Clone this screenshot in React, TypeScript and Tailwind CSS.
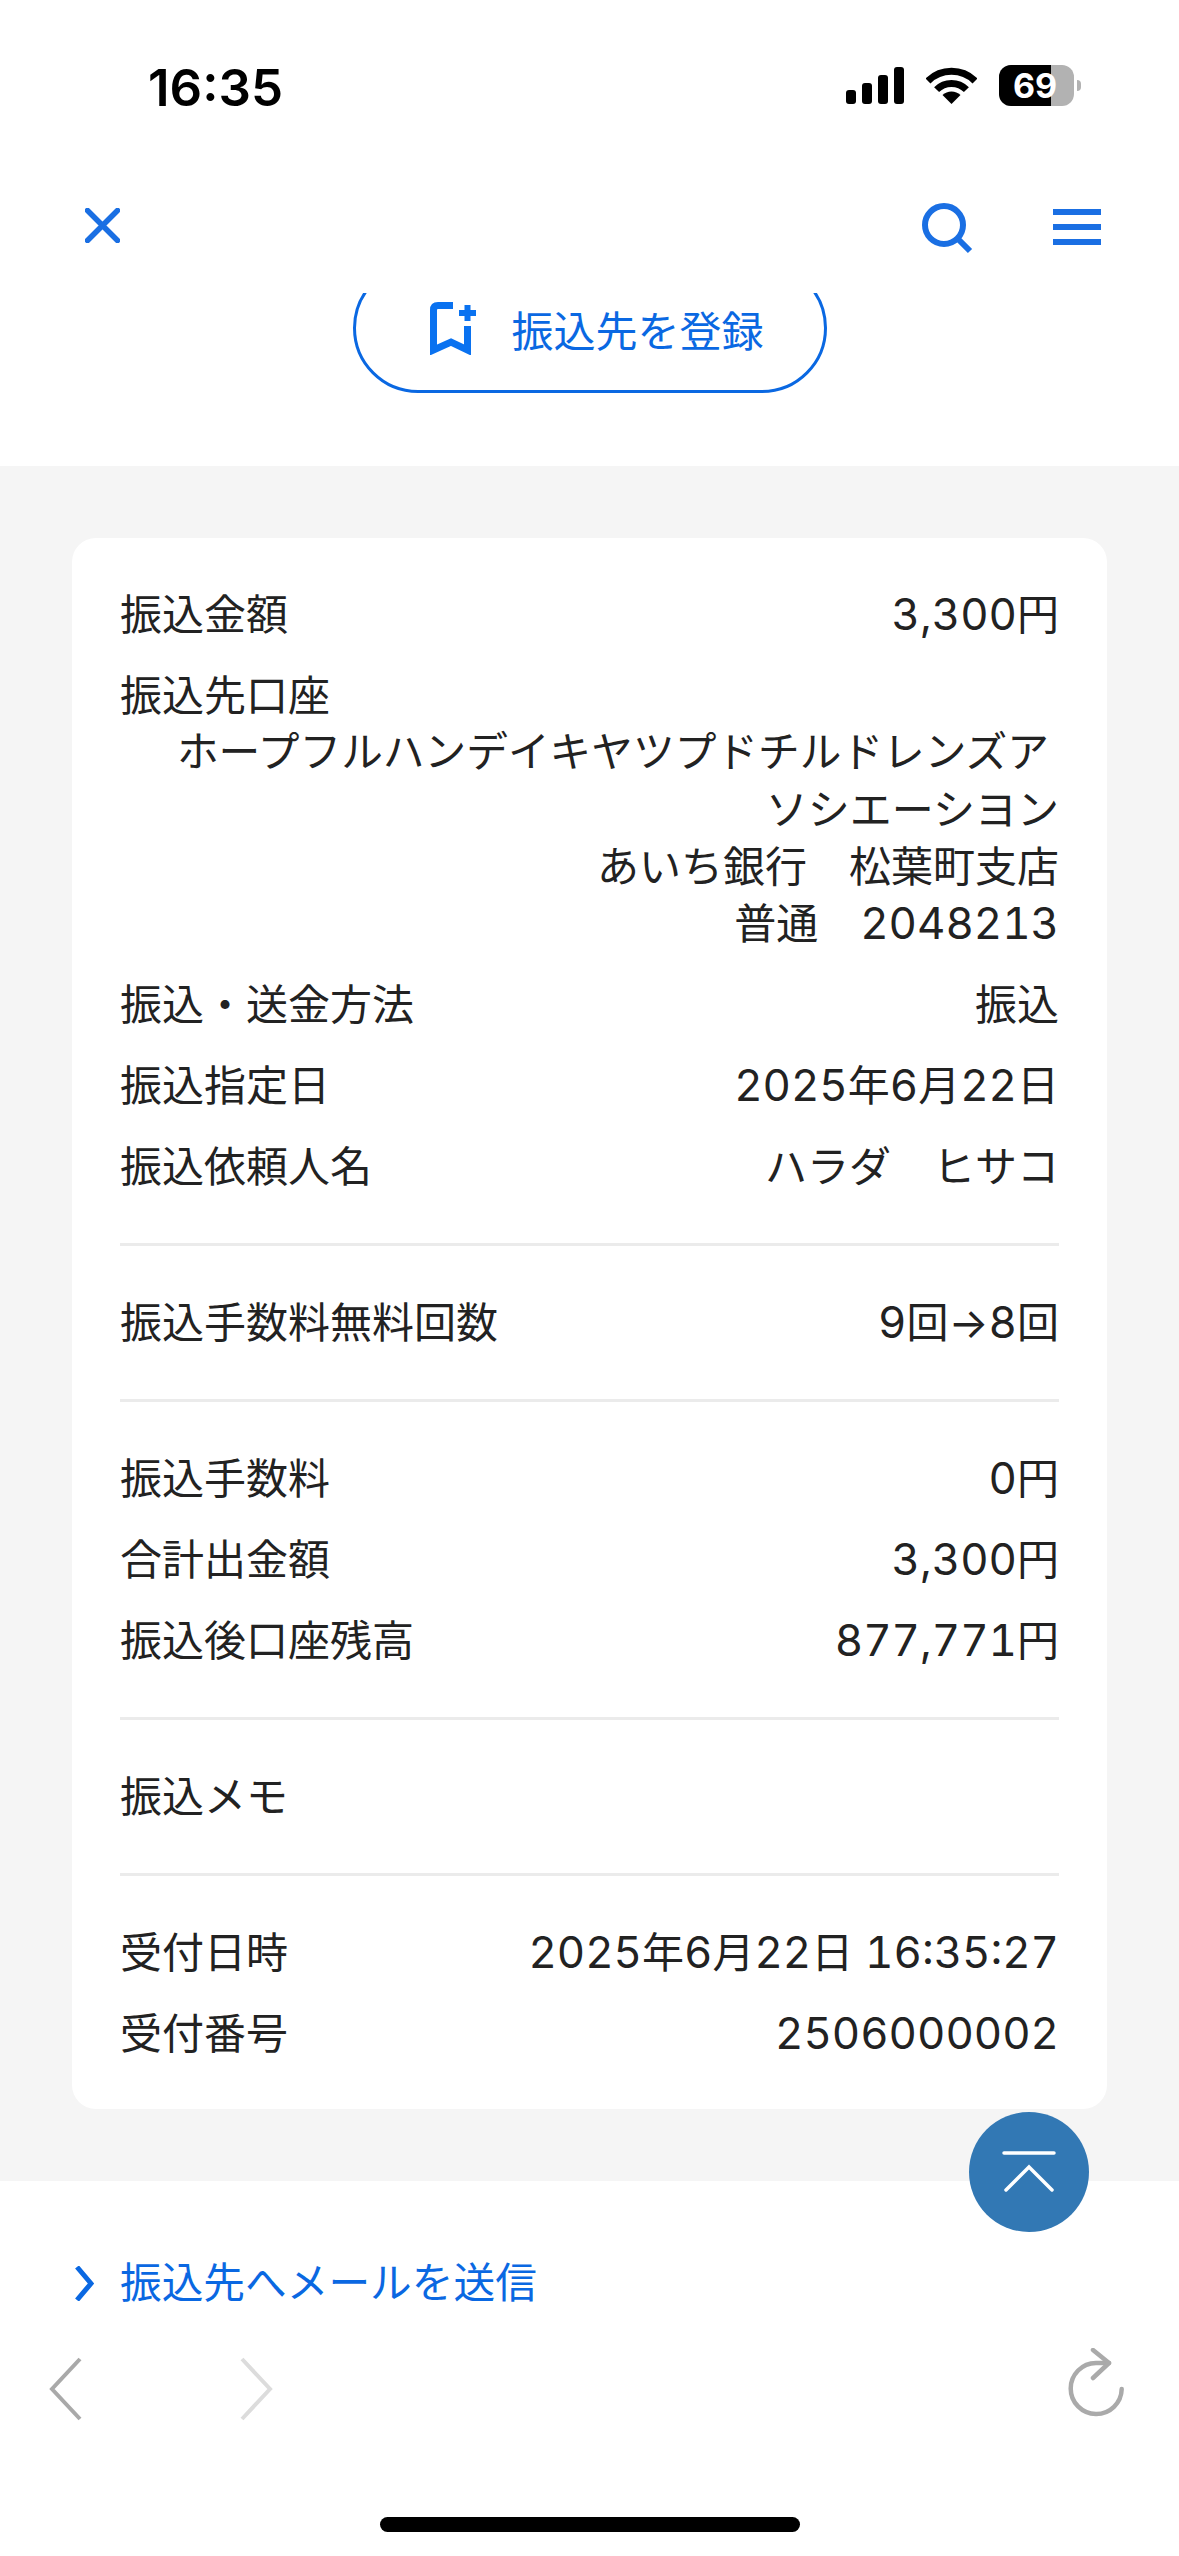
import type { ReactNode } from 'react';

const BLUE = 'text-[#0a68e2]';

function withNumbers(text: string): ReactNode[] {
  // latin digits are set larger than the kana and kanji around them
  return text.split(/([0-9,:]+)/).map((part, i) =>
    /^[0-9,:]+$/.test(part) ? (
      <span key={i} className="text-[43.8px] [font-variant-numeric:tabular-nums]">
        {part}
      </span>
    ) : (
      part
    ),
  );
}

function Row({ label, value }: { label: string; value?: string }) {
  return (
    <div className="flex justify-between h-[57px] items-center">
      <span>{label}</span>
      {value && <span>{withNumbers(value)}</span>}
    </div>
  );
}

function Divider() {
  return <div className="h-[3px] bg-[#ebebeb] mt-[47.5px] mb-[48.5px]" />;
}

function StatusBar() {
  return (
    <div className="h-[120px] pt-[58px] pl-[148px] pr-[98px] flex justify-between items-start">
      <span className="text-[51px] leading-[60px] font-semibold text-black font-['Inter',sans-serif]">16:35</span>
      <div className="flex items-start pt-[9px]">
        <div className="flex items-end gap-[6px] h-[37px]">
          <span className="w-[10px] h-[14px] rounded-[3px] bg-black" />
          <span className="w-[10px] h-[21px] rounded-[3px] bg-black" />
          <span className="w-[10px] h-[29px] rounded-[3px] bg-black" />
          <span className="w-[10px] h-[37px] rounded-[3px] bg-black" />
        </div>
        <svg className="ml-[22px]" width="51" height="37" viewBox="0 0 51 37" fill="none">
          <path d="M2 14 A33.5 33.5 0 0 1 49 14" stroke="#000" strokeWidth="7" />
          <path d="M10.6 22.6 A21 21 0 0 1 40.4 22.6" stroke="#000" strokeWidth="7" />
          <path d="M25.5 37 L16.5 28 A13 13 0 0 1 34.5 28 Z" fill="#000" />
        </svg>
        <div className="relative ml-[22px] -mt-[2px] w-[75px] h-[41px] rounded-[12px] overflow-hidden bg-[#b2b2b2]">
          <div className="h-full w-[52px] bg-black" />
          <span className="absolute inset-0 pr-[3px] flex items-center justify-center text-[34px] font-bold text-white font-['Inter',sans-serif]">69</span>
        </div>
        <div className="ml-[3px] mt-[13px] w-[4px] h-[11px] rounded-r-full bg-[#b2b2b2]" />
      </div>
    </div>
  );
}

function TopNav() {
  return (
    <div className="h-[173px] pl-[85px] pr-[78px] pt-[83px] flex justify-between items-start">
      <svg width="35" height="35" viewBox="0 0 35 35" fill="none" stroke="#1a6fe3" strokeWidth="5.5" strokeLinecap="round" className="mt-[5px]">
        <path d="M2.5 2.5 L32.5 32.5 M32.5 2.5 L2.5 32.5" />
      </svg>
      <div className="flex">
        <svg width="52" height="52" viewBox="0 0 52 52" fill="none" stroke="#1a6fe3" strokeWidth="6">
          <circle cx="22" cy="22" r="19" />
          <path d="M35.5 35.5 L48 48" />
        </svg>
        <div className="ml-[79px] mt-[6px] w-[48px] flex flex-col gap-[9px]">
          <div className="h-[6px] bg-[#1a6fe3]" />
          <div className="h-[6px] bg-[#1a6fe3]" />
          <div className="h-[6px] bg-[#1a6fe3]" />
        </div>
      </div>
    </div>
  );
}

function RegisterButton() {
  return (
    <div className="h-[173px] flex items-end justify-center overflow-hidden pb-[73px]">
      <div className={`w-[474px] h-[130px] shrink-0 rounded-[65px] border-[3px] border-[#0a68e2] flex items-center justify-center gap-[35px] pt-[6px] pl-[15px] ${BLUE}`}>
        <svg width="46" height="53" viewBox="0 0 46 53" fill="none" stroke="#0a72f0" className="-mt-[6px]">
          <path d="M23 3.5 H8 Q3.5 3.5 3.5 8 V48 L21 40 L37.5 48 V24" strokeWidth="7" />
          <path d="M37.5 19 V3 M29 11 H46" strokeWidth="6" />
        </svg>
        <span>振込先を登録</span>
      </div>
    </div>
  );
}

function BrowserBar() {
  return (
    <div className="mt-[43px] h-[90px] pl-[49px] pr-[51px] flex items-start justify-between">
      <div className="flex gap-[158px] pt-[2px]">
        <svg width="33" height="64" viewBox="0 0 33 64" fill="none" stroke="#a9a9a9" strokeWidth="4">
          <path d="M31 2 L3 32 L31 62" />
        </svg>
        <svg width="33" height="64" viewBox="0 0 33 64" fill="none" stroke="#dcdcdc" strokeWidth="4">
          <path d="M2 2 L30 32 L2 62" />
        </svg>
      </div>
      <svg width="60" height="72" viewBox="0 0 60 72" fill="none" stroke="#aaaaaa" strokeWidth="4.5" strokeLinecap="round" strokeLinejoin="round" className="-mt-[7px]">
        <path d="M53.7 41 A25.5 25.5 0 1 1 28 15 H41" />
        <path d="M25 2 L41 15 L25 30" />
      </svg>
    </div>
  );
}

export default function App() {
  return (
    <div className="relative w-[1179px] h-[2556px] overflow-hidden bg-white text-[42px] leading-[57px] text-[#222222] font-['Inter','Noto_Sans_CJK_JP',sans-serif] flex flex-col">
      <StatusBar />
      <TopNav />
      <RegisterButton />

      {/* Details */}
      <div className="bg-[#f5f5f5] py-[72px] px-[72px]">
        <div className="bg-white rounded-[24px] px-[48px] pt-[48px] pb-[47px]">
          <div className="flex flex-col gap-[24px]">
            <Row label="振込金額" value="3,300円" />
            <div>
              <div>振込先口座</div>
              <div className="text-right">
                <div className="pr-[10px] text-[41.7px]">ホープフルハンデイキヤツプドチルドレンズア</div>
                <div>ソシエーシヨン</div>
                <div>あいち銀行　松葉町支店</div>
                <div>普通　{withNumbers('2048213')}</div>
              </div>
            </div>
            <Row label="振込・送金方法" value="振込" />
            <Row label="振込指定日" value="2025年6月22日" />
            <Row label="振込依頼人名" value="ハラダ　ヒサコ" />
          </div>
          <Divider />
          <Row label="振込手数料無料回数" value="9回→8回" />
          <Divider />
          <div className="flex flex-col gap-[24px]">
            <Row label="振込手数料" value="0円" />
            <Row label="合計出金額" value="3,300円" />
            <Row label="振込後口座残高" value="877,771円" />
          </div>
          <Divider />
          <Row label="振込メモ" />
          <Divider />
          <div className="flex flex-col gap-[24px]">
            <Row label="受付日時" value="2025年6月22日 16:35:27" />
            <Row label="受付番号" value="2506000002" />
          </div>
        </div>
      </div>

      {/* Mail link */}
      <div className={`pt-[74px] pl-[75px] flex items-center gap-[26px] text-[41.7px] ${BLUE}`}>
        <svg width="19" height="35" viewBox="0 0 19 35" fill="none" stroke="#0a68e2" strokeWidth="5">
          <path d="M2 1 L16 17.5 L2 34" />
        </svg>
        <span>振込先へメールを送信</span>
      </div>

      <BrowserBar />

      <div className="mt-[72px] mx-auto w-[420px] h-[15px] rounded-full bg-black" />

      {/* Scroll to top, floats over the panel edge */}
      <div className="absolute left-[969px] top-[2112px] w-[120px] h-[120px] rounded-full bg-[#3278b4] flex items-center justify-center">
        <svg width="54" height="44" viewBox="0 0 54 44" fill="none" stroke="#fff" strokeWidth="3.5" strokeLinecap="round">
          <path d="M2 3 H52" />
          <path d="M4 40 L27 17 L50 40" />
        </svg>
      </div>
    </div>
  );
}
